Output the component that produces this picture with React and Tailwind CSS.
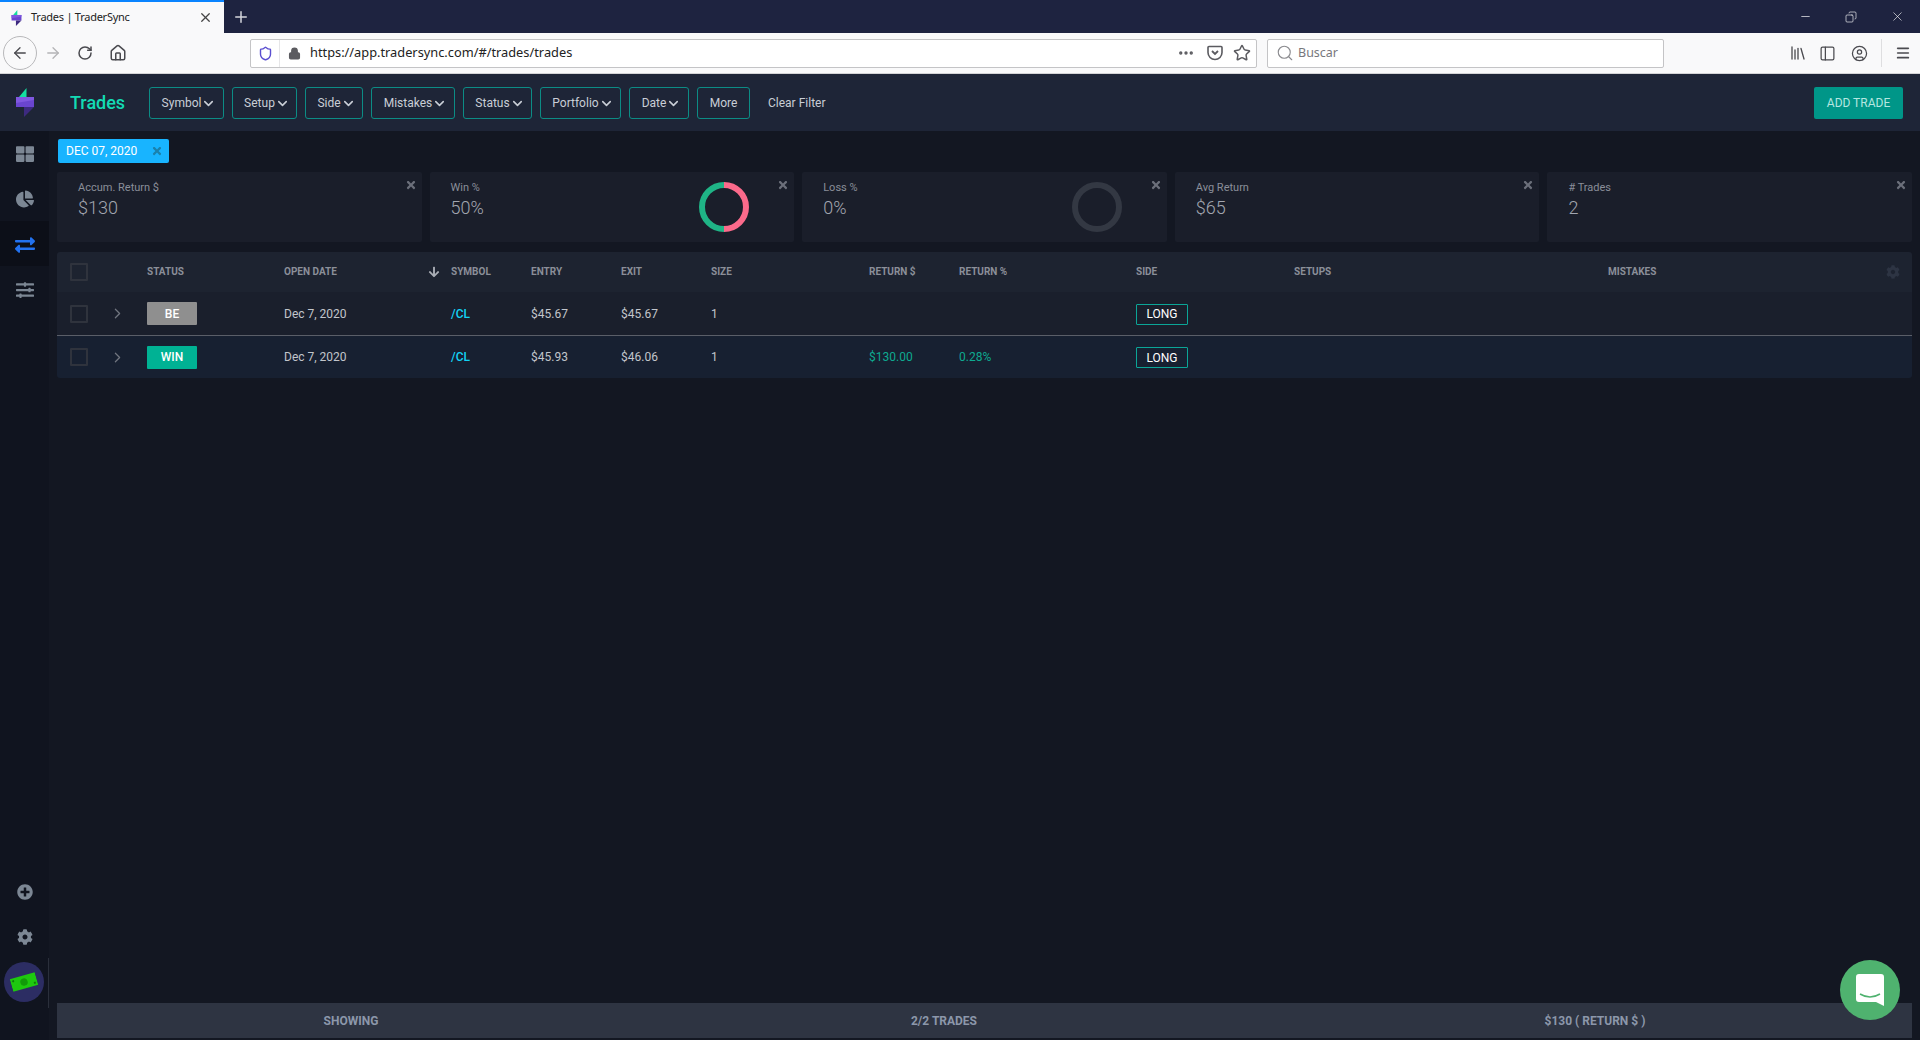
import React from 'react';
import {
  ArrowLeft, ArrowRight, RotateCw, Home, Lock, Shield, Star, Search, Library,
  PanelLeft, CircleUser, Menu, Minus, Copy, X, Plus, ChevronDown, ChevronRight, MoreHorizontal,
} from 'lucide-react';
import {
  FaThLarge, FaChartPie, FaExchangeAlt, FaSlidersH, FaPlusCircle, FaCog, FaArrowDown, FaTimes,
} from 'react-icons/fa';

const filters = [
  { name: 'Symbol', width: 'w-[75px]' },
  { name: 'Setup', width: 'w-[65px]' },
  { name: 'Side', width: 'w-[58px]' },
  { name: 'Mistakes', width: 'w-[84px]' },
  { name: 'Status', width: 'w-[69px]' },
  { name: 'Portfolio', width: 'w-[81px]' },
  { name: 'Date', width: 'w-[60px]' },
];

const cards = [
  { label: 'Accum. Return $', value: '$130' },
  { label: 'Win %', value: '50%', donut: 'win' },
  { label: 'Loss %', value: '0%', donut: 'loss' },
  { label: 'Avg Return', value: '$65' },
  { label: '# Trades', value: '2' },
];

const trades = [
  { status: 'BE', badge: 'bg-[#8f8f8f]', bg: 'bg-[#1a1f2c]', entry: '$45.67', exit: '$45.67', ret: '', pct: '' },
  { status: 'WIN', badge: 'bg-[#00b294]', bg: 'bg-[#172031]', entry: '$45.93', exit: '$46.06', ret: '$130.00', pct: '0.28%' },
];

const gridCols = 'grid grid-cols-[90px_137px_167px_80px_90px_90px_158px_90px_177px_158px_314px_1fr] items-center';

const Logo = ({ className }) => (
  <svg viewBox="0 0 18 29" className={className}>
    <polygon points="3,9 10.5,0 10.5,9" fill="#14e0a0" />
    <polygon points="0,9 18,9 18,19 0,19" fill="#6a45d0" />
    <polygon points="0,9 18,9 18,12 0,15" fill="#8058e0" />
    <polygon points="8,19 18,19 8,29" fill="#3d2a80" />
  </svg>
);

const Donut = ({ type }) => (
  <svg viewBox="0 0 50 50" className="w-[50px] h-[50px] mr-[45px] mt-[10px] shrink-0">
    {type === 'win' ? (
      <>
        <path d="M25 3 A22 22 0 0 0 25 47" fill="none" stroke="#1fb486" strokeWidth="6" />
        <path d="M25 3 A22 22 0 0 1 25 47" fill="none" stroke="#fb6a8b" strokeWidth="6" />
      </>
    ) : (
      <circle cx="25" cy="25" r="22" fill="none" stroke="#333843" strokeWidth="6" />
    )}
  </svg>
);

const BrowserChrome = () => (
  <div className="font-['Noto_Sans',sans-serif]">
    <div className="h-[33px] bg-[#1e2340] flex items-stretch">
      <div className="w-[224px] bg-[#f9f9fa] border-t-2 border-[#0a84ff] flex items-center pl-[11px] pr-[11px]">
        <Logo className="w-[11px] h-[16px] shrink-0" />
        <span className="ml-[9px] text-[11px] tracking-[-0.25px] text-[#222] flex-1 whitespace-nowrap">Trades | TraderSync</span>
        <X size={15} className="text-[#444]" />
      </div>
      <div className="w-[34px] flex items-center justify-center">
        <Plus size={18} className="text-[#d5d6dc]" />
      </div>
      <div className="flex-1" />
      <div className="flex items-center text-white">
        <div className="w-[46px] flex justify-center"><Minus size={13} strokeWidth={1.25} /></div>
        <div className="w-[46px] flex justify-center"><Copy size={12} strokeWidth={1.25} className="-scale-x-100" /></div>
        <div className="w-[46px] flex justify-center"><X size={15} strokeWidth={1} /></div>
      </div>
    </div>
    <div className="h-[41px] bg-[#f9f9fa] border-b border-[#d4d4d6] flex items-center text-[#4a4a4f]">
      <div className="w-[34px] h-[34px] ml-[3px] rounded-full border border-[#b8b8ba] flex items-center justify-center">
        <ArrowLeft size={18} strokeWidth={1.75} />
      </div>
      <ArrowRight size={18} strokeWidth={1.75} className="ml-[7px] text-[#b4b4b6]" />
      <RotateCw size={16} strokeWidth={2.25} className="ml-[15px]" />
      <Home size={18} strokeWidth={2} className="ml-[16px]" />
      <div className="ml-[123px] w-[1007px] h-[29px] bg-white border border-[#c4c4c6] rounded-[2px] flex items-center">
        <div className="w-[29px] h-full flex items-center justify-center border-r border-[#e6e6e8]">
          <Shield size={15} strokeWidth={2.25} className="text-[#5b4fd0]" />
        </div>
        <Lock size={13} strokeWidth={2.5} fill="#5b5b60" className="ml-[8px] text-[#5b5b60]" />
        <span className="ml-[9px] text-[12.8px] text-[#222] flex-1">https://app.tradersync.com/#/trades/trades</span>
        <MoreHorizontal size={18} strokeWidth={2.5} className="mr-[12px] text-[#5b5b60]" />
        <svg viewBox="0 0 16 16" className="w-[16px] h-[16px] mr-[10px] text-[#5b5b60]" fill="none" stroke="currentColor" strokeWidth="1.6">
          <path d="M2 1.5 H14 A1 1 0 0 1 15 2.5 V7.5 A7 7 0 0 1 1 7.5 V2.5 A1 1 0 0 1 2 1.5 Z" />
          <path d="M5 6 L8 9 L11 6" strokeWidth="1.8" />
        </svg>
        <Star size={18} strokeWidth={2} className="mr-[5px] text-[#5b5b60]" />
      </div>
      <div className="ml-[10px] w-[397px] h-[29px] bg-white border border-[#c4c4c6] rounded-[2px] flex items-center">
        <Search size={18} strokeWidth={1.5} className="ml-[8px] text-[#8a8a8e]" />
        <span className="ml-[4px] text-[12.5px] text-[#77777c]">Buscar</span>
      </div>
      <div className="flex-1" />
      <Library size={18} strokeWidth={1.75} className="mr-[12px]" />
      <PanelLeft size={17} strokeWidth={1.75} className="mr-[15px]" />
      <CircleUser size={17} strokeWidth={1.75} className="mr-[13px]" />
      <div className="h-[28px] border-l border-[#dedee0] pl-[13px] pr-[9px] flex items-center">
        <Menu size={16} strokeWidth={2.5} />
      </div>
    </div>
  </div>
);

const Header = () => (
  <div className="h-[57px] bg-[#1e2537] flex items-center shrink-0 pr-[17px]">
    <div className="w-[70px] flex justify-center pr-[21px]">
      <Logo className="w-[18px] h-[29px]" />
    </div>
    <span className="w-[79px] text-[18px] font-medium text-[#13dbb4]">Trades</span>
    <div className="flex gap-[8px]">
      {filters.map((f) => (
        <div key={f.name} className={`${f.width} h-[32px] pl-[5px] pt-px rounded-[3px] border border-[#0c8c85] flex items-center justify-center text-[12px] text-[#c9ced6]`}>
          {f.name}
          <ChevronDown size={15} strokeWidth={2.5} />
        </div>
      ))}
      <div className="w-[53px] h-[32px] pt-px rounded-[3px] border border-[#0c8c85] flex items-center justify-center text-[12px] text-[#c9ced6]">More</div>
    </div>
    <span className="ml-[18px] pt-px text-[12px] text-[#c9ced6]">Clear Filter</span>
    <div className="flex-1" />
    <div className="w-[89px] h-[32px] pt-px rounded-[2px] bg-[#009688] flex items-center justify-center text-[12px] text-[#b5e6e0]">ADD TRADE</div>
  </div>
);

const Sidebar = () => (
  <div className="w-[49px] bg-[#10141f] flex flex-col justify-between shrink-0 text-[#7c8794] text-[18px]">
    <div>
      <div className="h-[45px] flex items-center justify-center"><FaThLarge /></div>
      <div className="h-[45px] flex items-center justify-center"><FaChartPie /></div>
      <div className="h-[45px] pt-[2px] flex items-center justify-center bg-[#0c0f18] text-[#2272f0] text-[20px]"><FaExchangeAlt /></div>
      <div className="h-[45px] pt-[2px] flex items-center justify-center"><FaSlidersH /></div>
    </div>
    <div className="relative flex flex-col items-center pb-[38px]">
      <div className="h-[45px] w-full flex items-center justify-center text-[16px]"><FaPlusCircle /></div>
      <div className="h-[45px] w-full flex items-center justify-center text-[16px]"><FaCog /></div>
      <div className="w-[40px] h-[40px] mt-[3px] -ml-[1px] rounded-full bg-[#2c2d63] flex items-center justify-center">
        <svg viewBox="0 0 28 16" className="w-[26px] h-[16px] -rotate-[16deg]">
          <rect x="0" y="1" width="28" height="14" fill="#1ec80f" />
          <circle cx="14" cy="8" r="4" fill="#129a0a" />
          <circle cx="3" cy="4" r="1.2" fill="#0f7d09" />
          <circle cx="25" cy="12" r="1.2" fill="#0f7d09" />
        </svg>
      </div>
      <div className="absolute right-0 bottom-[32px] w-px h-[50px] bg-[#2a2f3b]" />
    </div>
  </div>
);

const Checkbox = () => <div className="w-[18px] h-[18px] ml-[13px] border-2 border-[#2f333d] rounded-[1px]" />;

const TradesTable = () => (
  <div className="mt-[10px] rounded-[3px] overflow-hidden">
    <div className={`${gridCols} h-[40px] pb-[1px] bg-[#1d2330] text-[10px] font-bold text-[#8b8f99]`}>
      <div><Checkbox /></div>
      <div>STATUS</div>
      <div className="flex items-center justify-between pr-[11px]">OPEN DATE <FaArrowDown className="text-[#a9adb5] text-[12px]" /></div>
      <div>SYMBOL</div>
      <div>ENTRY</div>
      <div>EXIT</div>
      <div>SIZE</div>
      <div>RETURN $</div>
      <div>RETURN %</div>
      <div>SIDE</div>
      <div>SETUPS</div>
      <div className="flex items-center justify-between pr-[12px]">
        MISTAKES
        <FaCog className="text-[#2d3443] text-[14px]" />
      </div>
    </div>
    {trades.map((t, i) => (
      <div
        key={t.status}
        className={`${gridCols} ${t.bg} ${i === 0 ? 'h-[44px] border-b border-[#5a5e68]' : 'h-[42px]'} text-[12px] text-[#c2c5cb]`}
      >
        <div className="flex items-center">
          <Checkbox />
          <ChevronRight size={17} strokeWidth={1.75} className="ml-[21px] text-[#70747e]" />
        </div>
        <div>
          <div className={`w-[50px] h-[23px] ${t.badge} rounded-[1px] flex items-center justify-center font-medium text-white`}>{t.status}</div>
        </div>
        <div>Dec 7, 2020</div>
        <div className="font-medium text-[#12d3f5]">/CL</div>
        <div>{t.entry}</div>
        <div>{t.exit}</div>
        <div>1</div>
        <div className="text-[#0eaa90]">{t.ret}</div>
        <div className="text-[#0eaa90]">{t.pct}</div>
        <div>
          <div className="w-[52px] h-[21px] mt-px border border-[#0ba597] rounded-[1px] flex items-center justify-center text-white">LONG</div>
        </div>
      </div>
    ))}
  </div>
);

export default function App() {
  return (
    <div className="h-screen flex flex-col overflow-hidden bg-[#131722] font-['Roboto',sans-serif]">
      <BrowserChrome />
      <Header />
      <div className="flex-1 flex min-h-0">
        <Sidebar />
        <div className="flex-1 flex flex-col pl-[8px] pr-[8px] pt-[8px] pb-[2px] min-w-0">
          <div className="w-[111px] ml-[1px] h-[24px] bg-[#18b4ff] rounded-[2px] flex items-center pl-[8px] text-[12px] text-white shrink-0">
            DEC 07, 2020
            <FaTimes className="ml-[14px] text-[#1a81ad] text-[12px]" />
          </div>
          <div className="mt-[9px] grid grid-cols-5 gap-[8px] shrink-0">
            {cards.map((c) => (
              <div key={c.label} className="relative h-[70px] bg-[#1a1e2a] rounded-[2px] pl-[21px] flex justify-between">
                <div className="pt-[9px]">
                  <div className="text-[11px] leading-[14px] text-[#8a8e99]">{c.label}</div>
                  <div className="mt-[1px] text-[18px] leading-[24px] font-light text-[#a2a6b0]">{c.value}</div>
                </div>
                {c.donut && <Donut type={c.donut} />}
                <FaTimes className="absolute top-[7px] right-[5px] text-[#6b6f7a] text-[12px]" />
              </div>
            ))}
          </div>
          <TradesTable />
          <div className="flex-1" />
          <div className="h-[35px] bg-[#2e3442] grid grid-cols-[588px_598px_1fr] items-center text-center text-[12px] font-bold text-[#8c97aa] shrink-0">
            <div>SHOWING</div>
            <div>2/2 TRADES</div>
            <div className="pl-[35px]">$130 ( RETURN $ )</div>
          </div>
        </div>
      </div>
      <div className="absolute left-[1840px] top-[960px] w-[60px] h-[60px] rounded-full bg-[#4fb26f] flex items-center justify-center">
        <svg viewBox="0 0 28 32" className="w-[28px] h-[32px]">
          <path d="M3 0 H25 A3 3 0 0 1 28 3 V32 L20 28 H3 A3 3 0 0 1 0 25 V3 A3 3 0 0 1 3 0 Z" fill="#fff" />
          <path d="M4 20 Q14 26 24 20" fill="none" stroke="#4fb26f" strokeWidth="1.5" />
        </svg>
      </div>
    </div>
  );
}
